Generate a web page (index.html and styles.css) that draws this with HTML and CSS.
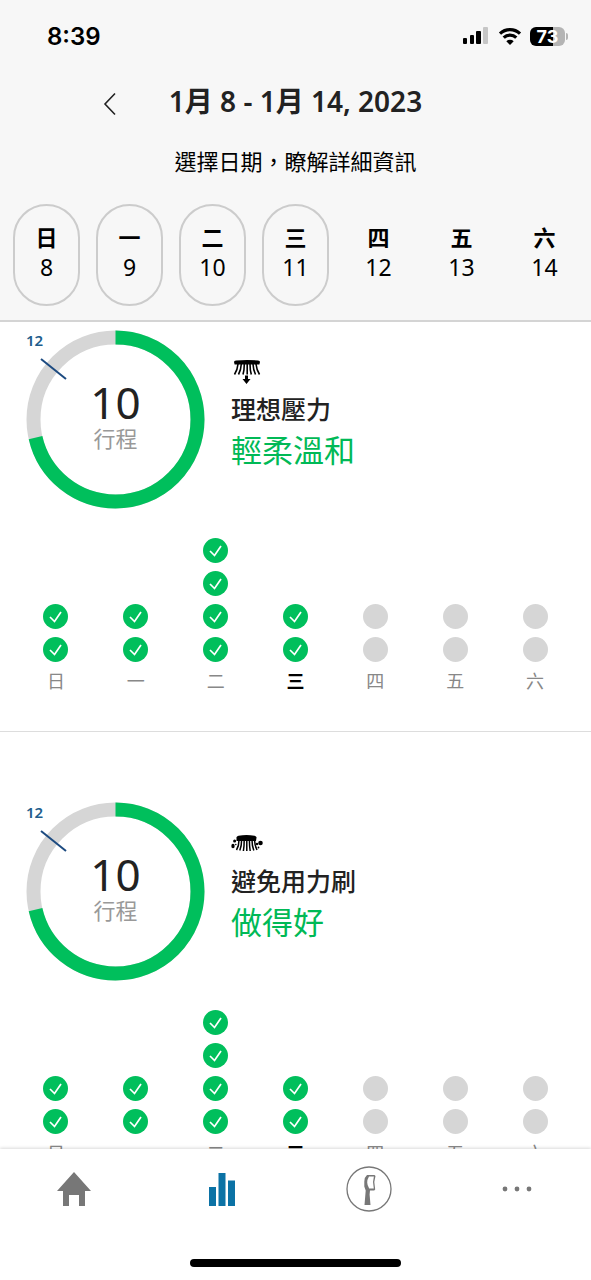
FILE: index.html
```html
<!DOCTYPE html>
<html lang="zh-Hant">
<head>
    <meta charset="UTF-8">
    <meta name="viewport" content="width=device-width, initial-scale=1.0">
    <title>1月 8 - 1月 14, 2023</title>
    <link rel="stylesheet" href="styles.css">
</head>
<body>
    <header class="header">
        <div class="status-bar">
            <span class="clock">8:39</span>
            <div class="status-icons">
                <svg width="28" height="18" viewBox="0 0 28 18" aria-hidden="true">
                    <rect x="1" y="11" width="4" height="6" rx="1"/>
                    <rect x="8" y="8" width="4" height="9" rx="1"/>
                    <rect x="14" y="4" width="5" height="13" rx="1"/>
                    <rect x="21" y="0" width="5" height="17" rx="1" fill="#c6c6c6"/>
                </svg>
                <svg width="24" height="18" viewBox="0 0 24 18" aria-hidden="true">
                    <path d="M2 6.600a14.500 14.500 0 0 1 20 0M5.700 10.600a9 9 0 0 1 12.600 0" fill="none" stroke="#000" stroke-width="3.200"/>
                    <path d="M12 18l-3.700-3.800a5.400 5.400 0 0 1 7.400 0z"/>
                </svg>
                <div class="battery"><span>73</span></div>
            </div>
        </div>

        <div class="title-bar">
            <button class="back" aria-label="返回">
                <svg width="14" height="24" viewBox="0 0 14 24"><path d="M12 1.500L2 12l10 10.500" fill="none" stroke="#222" stroke-width="1.600"/></svg>
            </button>
            <h1>1月 8 - 1月 14, 2023</h1>
        </div>
        <p class="hint">選擇日期，瞭解詳細資訊</p>

        <div class="days">
            <button class="day has-data"><b>日</b>8</button>
            <button class="day has-data"><b>一</b>9</button>
            <button class="day has-data"><b>二</b>10</button>
            <button class="day has-data"><b>三</b>11</button>
            <button class="day"><b>四</b>12</button>
            <button class="day"><b>五</b>13</button>
            <button class="day"><b>六</b>14</button>
        </div>
    </header>

    <main class="content">
        <section class="card">
            <div class="summary">
                <div class="ring">
                    <svg width="179" height="179" viewBox="0 0 179 179">
                        <circle cx="89.500" cy="89.500" r="82" pathLength="14" class="ring-track"/>
                        <circle cx="89.500" cy="89.500" r="82" pathLength="14" class="ring-value"/>
                        <path d="M15 29l25 20" class="ring-goal"/>
                    </svg>
                    <span class="goal">12</span>
                    <div class="count"><strong>10</strong><span>行程</span></div>
                </div>
                <div class="result">
                    <svg width="32" height="28" viewBox="0 0 32 28" aria-hidden="true">
                        <path d="M3 4q0-1.500 2-1.500 11-.8 22 0 2 0 2 1.500l-.6 2.500H3.600z"/>
                        <path d="M7 6Q6.500 12 3.500 16.500M10.300 6Q10 12 7.500 16.500M13.300 6q0 6-1.300 10.500M16.200 6v10.500M19 6q0 6 1.300 10.500M22 6q.3 6 2.500 10.500M25 6q.6 6 3.500 10.500" fill="none" stroke="#000" stroke-width="1.600"/>
                        <path d="M14 17.500h3v3.500h2.500L15.500 26l-4-5H14z"/>
                    </svg>
                    <h2>理想壓力</h2>
                    <p>輕柔溫和</p>
                </div>
            </div>
            <div class="chart"></div>
        </section>

        <section class="card">
            <div class="summary">
                <div class="ring">
                    <svg width="179" height="179" viewBox="0 0 179 179">
                        <circle cx="89.500" cy="89.500" r="82" pathLength="14" class="ring-track"/>
                        <circle cx="89.500" cy="89.500" r="82" pathLength="14" class="ring-value"/>
                        <path d="M15 29l25 20" class="ring-goal"/>
                    </svg>
                    <span class="goal">12</span>
                    <div class="count"><strong>10</strong><span>行程</span></div>
                </div>
                <div class="result">
                    <svg width="32" height="28" viewBox="0 0 32 28" aria-hidden="true">
                        <path d="M5.500 11V7.500q0-1.300 2-1.700 8-1.400 16 0 2 .4 2 1.700l-.5 3.500z"/>
                        <path d="M8 10Q8 16 5.500 20M10.600 10q0 6-1.800 10.500M13.200 10q0 6-.8 11M15.800 10v11M18.400 10q0 6 .8 11M21 10q0 6 1.800 10.500M23.500 10q.3 6 2.500 10" fill="none" stroke="#000" stroke-width="1.500"/>
                        <ellipse cx="2" cy="16" rx="1.700" ry="2.200"/><circle cx="3.600" cy="11" r="1.500"/><circle cx="4.800" cy="14.500" r=".8"/>
                        <circle cx="29.500" cy="13" r="2.300"/><circle cx="26" cy="14" r="1.200"/><circle cx="27.500" cy="17.500" r=".9"/>
                    </svg>
                    <h2>避免用力刷</h2>
                    <p>做得好</p>
                </div>
            </div>
            <div class="chart"></div>
        </section>
    </main>

    <nav class="tab-bar">
        <div class="tabs">
            <a href="#home" aria-label="首頁">
                <svg width="36" height="36" viewBox="0 0 36 36"><path d="M18 1l17 19h-6v15h-6V24H13v11H7V20H1z" fill="#777"/></svg>
            </a>
            <a href="#stats" aria-label="統計">
                <svg width="28" height="34" viewBox="0 0 28 34" fill="#0b72a5"><path d="M1 15h7v19H1zM10.500 1h7v33h-7zM20 8.500h7V34h-7z"/></svg>
            </a>
            <a href="#brush" aria-label="牙刷">
                <svg width="46" height="46" viewBox="0 0 46 46">
                    <circle cx="23" cy="23" r="22" fill="none" stroke="#777" stroke-width="1.300"/>
                    <path d="M21 9h7.500l1 1-1.200 6 .9 7.500-1 1H24l-.4 4 .9 10.500h-6l1.200-14.500-1.400-4V15.500Q18.500 11 21 9zm2 1.600q-1.800 3-1.800 6t2 5.800h4.600l-.8-6.400.9-5.400z" fill="#777" fill-rule="evenodd"/>
                </svg>
            </a>
            <a href="#more" aria-label="更多">
                <svg width="32" height="6" viewBox="0 0 32 6" fill="#777"><circle cx="4" cy="3" r="2.400"/><circle cx="16" cy="3" r="2.400"/><circle cx="28" cy="3" r="2.400"/></svg>
            </a>
        </div>
        <div class="home-indicator"></div>
    </nav>

    <script>
        const week = [
            { name: '日', done: 2 },
            { name: '一', done: 2 },
            { name: '二', done: 4 },
            { name: '三', done: 2, today: true },
            { name: '四', done: 0 },
            { name: '五', done: 0 },
            { name: '六', done: 0 }
        ];

        const check = '<svg width="25" height="25" viewBox="0 0 25 25"><path d="M7 13l4.500 4.500 6.500-9.500" fill="none" stroke="#fff" stroke-width="1.700"/></svg>';

        // Days without sessions show two empty dots
        function drawDay(day) {
            const dot = day.done ? '<i class="dot done">' + check + '</i>' : '<i class="dot"></i>';
            const label = day.today ? 'today' : '';
            return '<div class="column">' + dot.repeat(day.done || 2) +
                '<span class="' + label + '">' + day.name + '</span></div>';
        }

        document.querySelectorAll('.chart').forEach(chart => {
            chart.innerHTML = week.map(drawDay).join('');
        });
    </script>
</body>
</html>
```

FILE: styles.css
```css
* {
    box-sizing: border-box;
}

body {
    display: flex;
    flex-direction: column;
    height: 100vh;
    margin: 0;
    background-color: #fff;
    color: #222;
    font-family: "Noto Sans", "Noto Sans CJK TC", sans-serif;
}

h1, h2, p {
    margin: 0;
}

button {
    padding: 0;
    border: none;
    background: none;
    color: inherit;
    font: inherit;
    cursor: pointer;
}

svg {
    display: block;
}

/* Header */
.header {
    flex: none;
    padding-bottom: 14px;
    background-color: #f7f7f7;
    border-bottom: 2px solid #d4d4d4;
}

.status-bar {
    display: flex;
    justify-content: space-between;
    align-items: center;
    height: 72px;
    padding: 0 26px 0 47px;
    color: #000;
}

.clock {
    font-family: Inter, sans-serif;
    font-size: 24px;
    font-weight: 600;
}

.status-icons {
    display: flex;
    align-items: center;
    gap: 8px;
}

.battery {
    position: relative;
    width: 35px;
    height: 19px;
    border-radius: 6px;
    background: linear-gradient(to right, #000 65%, #b4b4b4 65%);
    color: #fff;
    font: 700 18px/19px Inter, sans-serif;
    text-align: center;
}

.battery::after {
    content: "";
    position: absolute;
    top: 6px;
    right: -3px;
    width: 2px;
    height: 7px;
    border-radius: 0 2px 2px 0;
    background-color: #b4b4b4;
}

.title-bar {
    position: relative;
    height: 60px;
    text-align: center;
}

.title-bar h1 {
    font-size: 28px;
    font-weight: 600;
    line-height: 58px;
}

.back {
    position: absolute;
    left: 103px;
    top: 20px;
}

.hint {
    color: #000;
    font-size: 22px;
    font-weight: 400;
    line-height: 58px;
    text-align: center;
}

.days {
    display: grid;
    grid-template-columns: repeat(7, 1fr);
    padding: 14px 5px 0;
}

.day {
    display: flex;
    flex-direction: column;
    justify-content: center;
    align-items: center;
    height: 102px;
    margin: 0 8px;
    padding-bottom: 6px;
    border: 2px solid transparent;
    border-radius: 34px;
    color: #000;
    font-size: 23px;
    font-weight: 400;
    line-height: 30px;
}

.day b {
    font-size: 22px;
    font-weight: 700;
}

.has-data {
    border-color: #ccc;
}

/* Cards */
.content {
    flex: 1;
    min-height: 0;
    overflow: hidden;
}

.card {
    padding: 70px 0 39px;
    border-bottom: 1px solid #ddd;
}

.card:first-child {
    padding-top: 8px;
}

.summary {
    display: flex;
    gap: 26px;
    padding-left: 26px;
}

.ring {
    position: relative;
}

.ring circle {
    fill: none;
    stroke-width: 14px;
}

.ring-track {
    stroke: #d6d6d6;
}

.ring-value {
    stroke: #00bf5c;
    stroke-dasharray: 10 4;
    transform: rotate(-90deg);
    transform-origin: center;
}

.ring-goal {
    stroke: #1c4a80;
    stroke-width: 2px;
}

.goal {
    position: absolute;
    left: 0;
    top: 0;
    color: #215d8c;
    font-size: 15px;
    font-weight: 600;
    line-height: 20px;
}

.count {
    position: absolute;
    inset: 0;
    display: flex;
    flex-direction: column;
    justify-content: center;
    align-items: center;
    padding-bottom: 8px;
}

.count strong {
    font-size: 44px;
    font-weight: 400;
    line-height: 44px;
}

.count span {
    color: #999;
    font-size: 22px;
    font-weight: 400;
    line-height: 28px;
}

.result {
    padding-top: 28px;
}

.result h2 {
    font-size: 25px;
    font-weight: 500;
    line-height: 36px;
    margin-top: 5px;
}

.result p {
    color: #00b956;
    font-size: 31px;
    font-weight: 400;
    line-height: 46px;
}

.chart {
    display: grid;
    grid-template-columns: repeat(7, 1fr);
    align-items: end;
    padding: 29px 16px 0;
}

.column {
    display: flex;
    flex-direction: column;
    align-items: center;
    gap: 8px;
    color: #888;
    font-size: 18px;
    font-weight: 400;
    line-height: 22px;
}

.dot {
    width: 25px;
    height: 25px;
    border-radius: 50%;
    background-color: #d6d6d6;
}

.done {
    background-color: #00bf5c;
}

.today {
    color: #000;
    font-weight: 700;
}

/* Bottom tabs */
.tab-bar {
    position: relative;
    flex: none;
    padding-bottom: 13px;
    background-color: #fff;
    box-shadow: 0 -1px 3px rgba(0, 0, 0, 0.15);
}

.tabs {
    display: grid;
    grid-template-columns: repeat(4, 1fr);
    align-items: center;
    justify-items: center;
    height: 80px;
    margin-bottom: 30px;
}

.home-indicator {
    width: 211px;
    height: 8px;
    margin: 0 auto;
    border-radius: 4px;
    background-color: #000;
}
```
